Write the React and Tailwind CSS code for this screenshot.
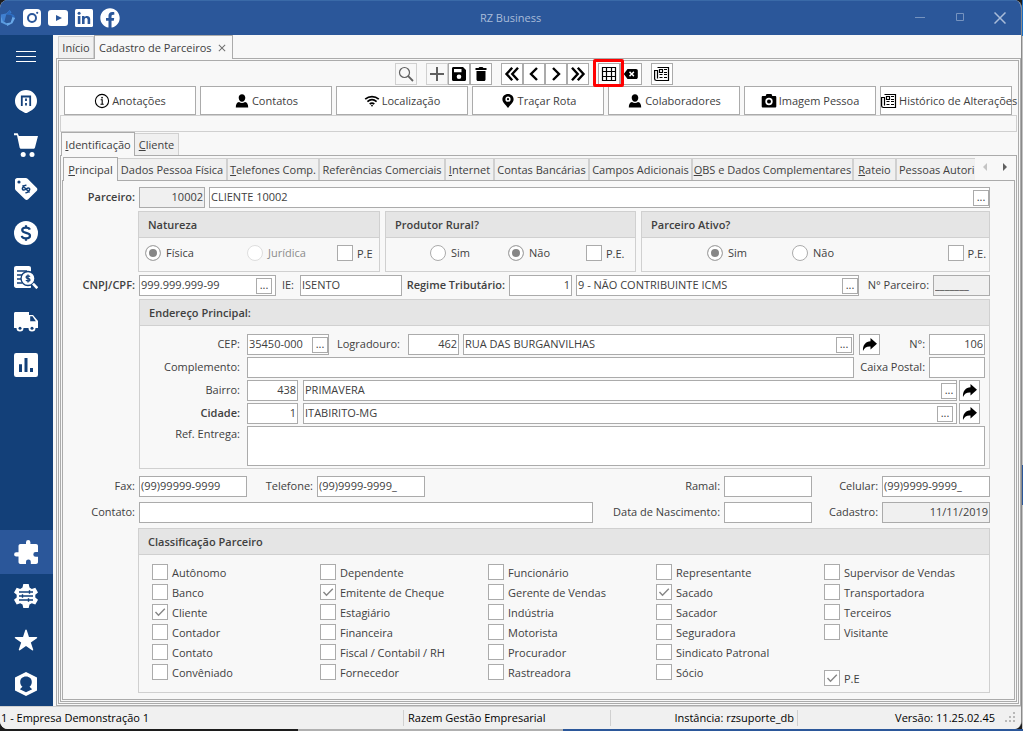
import React from "react";
import { MdClose } from "react-icons/md";
import { FaFacebook } from "react-icons/fa";
import { IoStar } from "react-icons/io5";

const line = "border-[#ababab]";

function Field({ label, className = "", gray, right, more, moreClass = "right-1", value = "", ...rest }) {
  return (
    <div className={"relative flex h-[21px] shrink-0 " + className}>
      <input
        aria-label={label}
        defaultValue={value}
        readOnly={gray}
        className={
          "h-full w-full min-w-0 border px-px pb-0.5 text-[11px] text-[#404040] outline-none " +
          line +
          (gray ? " bg-[#f0f0f0]" : " bg-white") +
          (right ? " text-right" : "")
        }
        {...rest}
      />
      {more && (
        <button
          type="button"
          aria-label={"Buscar " + label}
          className={"absolute top-[3px] flex h-4 w-4 items-center justify-center border bg-white pb-1 text-[11px] leading-none " + line + " " + moreClass}
        >
          ...
        </button>
      )}
    </div>
  );
}

function Label({ className = "", bold, children }) {
  return (
    <span className={"shrink-0 text-right whitespace-nowrap " + (bold ? "font-semibold " : "") + className}>
      {children}
    </span>
  );
}

function Radio({ name, label, checked, disabled, className = "" }) {
  return (
    <label className={"flex items-center gap-[5px] whitespace-nowrap " + (disabled ? "text-[#8c8c8c] " : "") + className}>
      <input
        type="radio"
        name={name}
        defaultChecked={checked}
        disabled={disabled}
        className="h-4 w-4 shrink-0 appearance-none rounded-full border border-[#ababab] bg-white checked:border-[#ababab] checked:bg-[#868686] checked:shadow-[inset_0_0_0_3px_#fff] disabled:border-[#dedede]"
      />
      {label}
    </label>
  );
}

function Check({ label, checked, className = "" }) {
  return (
    <label className={"flex items-center gap-1 whitespace-nowrap " + className}>
      <span className="relative flex h-4 w-4 shrink-0">
        <input type="checkbox" defaultChecked={checked} className="peer h-4 w-4 appearance-none border border-[#ababab] bg-white" />
        <svg viewBox="0 0 16 16" className="pointer-events-none absolute inset-0 hidden h-4 w-4 peer-checked:block" fill="none" stroke="#868686" strokeWidth="1.4">
          <path d="M3.5 8l3 3.2L12.8 4.8" />
        </svg>
      </span>
      <span className="pt-0.5">{label}</span>
    </label>
  );
}

function Group({ title, className = "", children }) {
  return (
    <section role="group" aria-label={title} className={"flex min-w-0 flex-col border border-[#d0d0d0] " + className}>
      <h2 className="flex h-[26px] shrink-0 items-center border-b border-[#d0d0d0] bg-[#e5e5e5] px-[9px] font-semibold">{title}</h2>
      {children}
    </section>
  );
}

function ArrowButton({ label }) {
  return (
    <button type="button" aria-label={label} className={"flex h-[21px] w-[21px] shrink-0 items-center justify-center border bg-white text-black " + line}>
      <svg viewBox="0 0 16 14" className="h-3.5 w-4" fill="currentColor">
        <path d="M8.500 0L15 5.800L8.500 11.600V8.500C5 8.200 2.500 9.400 1 13C0.400 7 4 3.400 8.500 3.200Z" />
      </svg>
    </button>
  );
}

const NewsIcon = ({ className }) => (
  <svg viewBox="0 0 16 16" className={className} fill="none" stroke="currentColor" strokeWidth="1.2">
    <path d="M3.500 1.500h11v13H2.500c-1.200 0-1.900-.7-1.900-1.700V4.500h2.900v8" />
    <path d="M5.500 3.500h3v3h-3zM10 3.500h3M10 6.500h3M5.500 8.500h3M10 8.500h3M5.500 11.500h3M10 11.500h3" />
  </svg>
);
const PersonIcon = ({ className }) => (
  <svg viewBox="0 0 16 16" className={className} fill="currentColor">
    <path d="M8 1.200c2 0 3.300 1.500 3.300 3.600S10 8.800 8 8.800 4.700 7 4.700 4.800 6 1.200 8 1.200zM5 8.900c1.800 1.500 4.200 1.500 6 0 2.200.5 3.200 2 3.200 5.600H1.800c0-3.600 1-5.100 3.200-5.600z" />
  </svg>
);
const InfoIcon = ({ className }) => (
  <svg viewBox="0 0 16 16" className={className} fill="none" stroke="currentColor" strokeWidth="1.100">
    <circle cx="8" cy="8" r="6.600" />
    <path d="M6.700 6.700h1.500v4.500M6.500 11.200h3.200" />
    <rect x="7.300" y="3.900" width="1.500" height="1.500" fill="currentColor" stroke="none" />
  </svg>
);
const WifiIcon = ({ className }) => (
  <svg viewBox="0 0 16 16" className={className} fill="none" stroke="currentColor" strokeWidth="1.700">
    <path d="M1.200 6.200c4-3.500 9.600-3.500 13.600 0M3.400 8.700c2.800-2.400 6.400-2.400 9.200 0M5.700 11c1.500-1.200 3.100-1.200 4.600 0" />
    <circle cx="8" cy="12.600" r="0.900" fill="currentColor" stroke="none" />
  </svg>
);
const PinIcon = ({ className }) => (
  <svg viewBox="0 0 16 16" className={className} fill="currentColor">
    <path fillRule="evenodd" d="M8 1c3.300 0 5.600 2.300 5.600 5.300C13.600 9.500 10.500 11.500 8 15 5.500 11.500 2.400 9.500 2.400 6.300 2.400 3.300 4.700 1 8 1zm0 2.600a2.600 2.600 0 100 5.200 2.600 2.600 0 000-5.200z" />
    <circle cx="8" cy="6.200" r="1.100" />
  </svg>
);
const CameraIcon = ({ className }) => (
  <svg viewBox="0 0 16 16" className={className} fill="currentColor">
    <path fillRule="evenodd" d="M5.500 1h5l.8 2H14c.8 0 1.300.5 1.300 1.300v8.900c0 .8-.5 1.300-1.300 1.300H2c-.8 0-1.300-.5-1.300-1.300V4.300C.7 3.500 1.200 3 2 3h2.700zM8 4.800a3.700 3.700 0 100 7.400 3.700 3.700 0 000-7.400zm0 1.700a2 2 0 110 4 2 2 0 010-4z" />
  </svg>
);

function SideIcon({ children }) {
  return (
    <svg viewBox="0 0 24 24" className="h-6 w-6" fill="currentColor">
      {children}
    </svg>
  );
}
const DARK = "#134079";
const sideTop = [
  ["Empresa", <SideIcon key="i">
    <path d="M12 1a11 11 0 0111 11c0 4.200-2.300 7.600-5.800 9.500L12 24.500l-5.200-3C3.300 19.600 1 16.200 1 12A11 11 0 0112 1z" />
    <path d="M7.800 17V7.500h8.400V17" fill="none" stroke={DARK} strokeWidth="1.800" />
    <path d="M12 9.500v2.500m0 2v2.500" fill="none" stroke={DARK} strokeWidth="1.800" />
  </SideIcon>],
  ["Vendas", <SideIcon key="i">
    <path d="M0 .2h3.700l1.200 2.800H24l-3 11.400c-.2.900-.8 1.400-1.800 1.400H7.400c-1 0-1.600-.5-1.800-1.400L3 2.200H0z" />
    <circle cx="9.200" cy="21.500" r="2.500" />
    <circle cx="18" cy="21.500" r="2.500" />
  </SideIcon>],
  ["Preços", <SideIcon key="i">
    <path d="M1 3.200C1 2 2 1 3.200 1h8.600c.7 0 1.300.3 1.800.7l9 9c1 1 1 2.200 0 3.200l-8.400 8.400c-1 1-2.200 1-3.200 0l-9.300-9.100C1.300 12.700 1 12.100 1 11.500z" />
    <circle cx="5" cy="5" r="1.600" fill={DARK} />
    <g transform="rotate(-45 12 12)" fill="none" stroke={DARK} strokeWidth="1.500">
      <path d="M14.800 9.800c-1-1.900-5.600-1.600-5.600.5 0 2.400 5.600 1 5.600 3.500 0 2-4.600 2.400-5.800.3M12 7v10" />
    </g>
  </SideIcon>],
  ["Financeiro", <SideIcon key="i">
    <circle cx="12" cy="12" r="12" />
    <path d="M15.800 8.600c-.4-1.400-1.800-2-3.800-2-2.300 0-3.800.9-3.800 2.500 0 3.900 7.800 1.700 7.800 5.600 0 1.700-1.600 2.700-4 2.700s-4-.9-4.200-2.500M12 4.200v2.600m0 10.400v2.600" fill="none" stroke={DARK} strokeWidth="2.200" />
  </SideIcon>],
  ["Relatórios", <SideIcon key="i">
    <path d="M2.200 1h12.600c1.300 0 2.200.9 2.200 2.200V22c0 .6-.4 1-1 1H2.200C.900 23 0 22.100 0 20.800V3.200C0 1.900.9 1 2.200 1z" />
    <path d="M3 6h10M3 10h5M3 14h4M3 18h5" stroke={DARK} strokeWidth="1.700" />
    <circle cx="14" cy="13.500" r="7" stroke={DARK} strokeWidth="1.400" />
    <path d="M19 18.600l4.300 4.600" stroke="white" strokeWidth="2.600" />
    <path d="M16 11.700c-1-1.200-3.900-.9-3.900.5 0 1.700 3.900.9 3.900 2.700 0 1.300-2.900 1.700-4.100.3M14 9.600v8" fill="none" stroke={DARK} strokeWidth="1.300" />
  </SideIcon>],
  ["Transporte", <SideIcon key="i">
    <path d="M1.500 3H15v3h4l5 6v7h-2.500a3.500 3.500 0 01-7 0h-5a3.500 3.500 0 01-7 0H0V4.500C0 3.600.6 3 1.500 3z" />
    <path d="M16.200 7.200h2.300l3.300 5h-5.600z" fill={DARK} />
    <circle cx="6" cy="19.300" r="1.500" fill={DARK} />
    <circle cx="18" cy="19.300" r="1.500" fill={DARK} />
  </SideIcon>],
  ["Indicadores", <SideIcon key="i">
    <rect width="24" height="24" rx="2.200" />
    <path d="M6.500 11.300V19M12 5v14M17.500 15v4" stroke={DARK} strokeWidth="3" />
  </SideIcon>],
];
const sideBottom = [
  ["Módulos", <SideIcon key="i">
    <path d="M4.500 6c0-1.200.8-2 2-2H12V2.200a2.200 2.200 0 014.400 0V4H22c1.200 0 2 .8 2 2v6h-2.300a2.400 2.400 0 000 4.800H24V22c0 1.200-.8 2-2 2h-5.200v-2.200a2.400 2.400 0 00-4.800 0V24H6.500c-1.200 0-2-.8-2-2v-5.500H2.200a2.100 2.100 0 010-4.200h2.300z" />
  </SideIcon>],
  ["Configurações", <SideIcon key="i">
    <path d="M9.300 0h5.400l.8 3.600 2.300 1.300 3.500-1.200 2.700 4.700-2.700 2.400v2.600l2.700 2.400-2.700 4.700-3.500-1.200-2.300 1.200-.8 3.500H9.300l-.8-3.500-2.300-1.200-3.500 1.200L0 15.800l2.700-2.400v-2.600L0 8.400l2.700-4.700 3.500 1.200 2.300-1.300z" />
    <path d="M5 8h14M5 12h14M5 16h14M15.500 6.200v3.600M8.500 10.200v3.600M14.500 14.200v3.600" stroke={DARK} strokeWidth="1.400" />
  </SideIcon>],
  ["Favoritos", <IoStar key="i" className="h-6 w-6" />],
  ["Usuário", <SideIcon key="i">
    <path d="M12 0l11 5.500v13L12 24 1 18.500v-13z" />
    <path d="M12 4.500c3.500 0 5.800 2.300 5.800 5.500 0 2.200-.9 3.700-2.300 4.800l2.700 2.400L12 20.300l-6.200-3.100 2.700-2.400C7.100 13.700 6.200 12.200 6.200 10c0-3.200 2.300-5.500 5.800-5.500z" fill={DARK} />
  </SideIcon>],
];

const actions = [
  ["Anotações", InfoIcon],
  ["Contatos", PersonIcon],
  ["Localização", WifiIcon],
  ["Traçar Rota", PinIcon],
  ["Colaboradores", PersonIcon],
  ["Imagem Pessoa", CameraIcon],
  ["Histórico de Alterações", NewsIcon],
];

function Chevrons({ d }) {
  return (
    <svg viewBox="0 0 16 16" className="h-4 w-4" fill="none" stroke="currentColor" strokeWidth="2.400">
      <path d={d} />
    </svg>
  );
}

const toolGroups = [
  [["Pesquisar", <svg key="i" viewBox="0 0 16 16" className="h-4 w-4" fill="none" stroke="currentColor" strokeWidth="1.200"><circle cx="6.500" cy="6.500" r="5" /><path d="M10.200 10.200L15 15" strokeWidth="1.800" /></svg>, true]],
  [
    ["Novo", <svg key="i" viewBox="0 0 16 16" className="h-4 w-4" stroke="currentColor" strokeWidth="2"><path d="M8 1v14M1 8h14" /></svg>, true],
    ["Salvar", <svg key="i" viewBox="0 0 16 16" className="h-4 w-4" fill="currentColor"><path fillRule="evenodd" d="M2.500 1H12l3 3v9.500c0 .9-.6 1.500-1.500 1.500h-11C1.600 15 1 14.400 1 13.500v-11C1 1.600 1.600 1 2.500 1zM3 3v3.200h7.500V3zM8 8.500a2.300 2.300 0 100 4.600 2.300 2.300 0 000-4.600z" /></svg>],
    ["Excluir", <svg key="i" viewBox="0 0 16 16" className="h-4 w-4" fill="currentColor"><path d="M2.500 2h3l1-1h3l1 1h3v2h-11zM3.500 5h9v8.500c0 .9-.6 1.500-1.500 1.500H5c-.9 0-1.500-.6-1.500-1.500z" /></svg>],
  ],
  [
    ["Primeiro", <Chevrons key="i" d="M8.200 1.800L2.500 8l5.700 6.200M14 1.800L8.300 8l5.700 6.200" />],
    ["Anterior", <Chevrons key="i" d="M11 2L5 8l6 6" />],
    ["Próximo", <Chevrons key="i" d="M5 2l6 6-6 6" />],
    ["Último", <Chevrons key="i" d="M2 1.800L7.700 8 2 14.200M7.800 1.800L13.500 8l-5.700 6.200" />],
  ],
  [
    ["Grade", <svg key="i" viewBox="0 0 16 16" className="h-4 w-4 shrink-0" fill="none" stroke="currentColor" strokeWidth="1.200"><path d="M1.500 1.500h13v13h-13zM1.500 5.500h13M1.500 10.500h13M5.500 1.500v13M10.500 1.500v13" /></svg>, false, true],
    ["Limpar", <svg key="i" viewBox="0 0 16 16" className="h-4 w-4" fill="currentColor"><path fillRule="evenodd" d="M4.500 3H13c1.100 0 1.800.7 1.800 1.800v6.400c0 1.100-.7 1.800-1.800 1.800H4.500L.8 8zM7 5.300L6 6.400 7.700 8 6 9.600l1 1.100L8.700 9l1.700 1.700 1-1.100L9.800 8l1.600-1.600-1-1.100L8.700 7z" /></svg>],
  ],
  [["Relatório", <NewsIcon key="i" className="h-4 w-4" />]],
];

const innerTabs = [
  ["", "Dados Pessoa Física", "w-[110px]"],
  ["T", "elefones Comp.", "w-[92px]"],
  ["", "Referências Comerciais", "w-[126px]"],
  ["I", "nternet", "w-[49px]"],
  ["", "Contas Bancárias", "w-[95px]"],
  ["", "Campos Adicionais", "w-[103px]"],
  ["O", "BS e Dados Complementares", "w-[161px]"],
  ["R", "ateio", "w-[43px]"],
];

const columns = [
  [["Autônomo"], ["Banco"], ["Cliente", true], ["Contador"], ["Contato"], ["Convêniado"]],
  [["Dependente"], ["Emitente de Cheque", true], ["Estagiário"], ["Financeira"], ["Fiscal / Contabil / RH"], ["Fornecedor"]],
  [["Funcionário"], ["Gerente de Vendas"], ["Indústria"], ["Motorista"], ["Procurador"], ["Rastreadora"]],
  [["Representante"], ["Sacado", true], ["Sacador"], ["Seguradora"], ["Sindicato Patronal"], ["Sócio"]],
  [["Supervisor de Vendas"], ["Transportadora"], ["Terceiros"], ["Visitante"]],
];

function TitleBar() {
  return (
    <header className="grid h-[35px] shrink-0 grid-cols-[1fr_auto_1fr] items-center border-t border-[#3a6aa8] bg-[#2b579a] text-white">
      <div className="flex items-center gap-[7px]">
        <svg viewBox="0 0 18 18" className="h-[18px] w-4">
          <path d="M1 5l6-1 4-4 2 3-6 2-2 8-3-1z" fill="#3f7fd0" />
          <path d="M11 0l1 4 4 2 1 4-3 1-1-5-6-1z" fill="#2d6cc0" />
          <path d="M17 9l-3 6-6 3-1-3 5-1 2-6z" fill="#69a8e8" />
          <path d="M1 6l2 6 6 4-2 1-6-3z" fill="#5a9be0" />
        </svg>
        <a href="#instagram" aria-label="Instagram">
          <svg viewBox="0 0 18 18" className="h-[18px] w-[18px]">
            <rect width="18" height="18" rx="4" fill="white" />
            <circle cx="9" cy="9" r="4" fill="none" stroke="#2b579a" strokeWidth="2" />
            <circle cx="14.200" cy="3.800" r="1.100" fill="#2b579a" />
          </svg>
        </a>
        <a href="#youtube" aria-label="YouTube">
          <svg viewBox="0 0 20 16" className="h-4 w-5">
            <rect width="20" height="16" rx="3" fill="white" />
            <path d="M8 5l6 3-6 3z" fill="#2b579a" />
          </svg>
        </a>
        <a href="#linkedin" aria-label="LinkedIn">
          <svg viewBox="0 0 18 18" className="h-[18px] w-[18px]">
            <rect width="18" height="18" rx="1.500" fill="white" />
            <path d="M2.800 7h2.600v8H2.800zM7 7h2.500v1.200c1.200-2 5.700-2 5.700 1.900V15h-2.600v-4.200c0-2.400-3-2.200-3 0V15H7z" fill="#2b579a" />
            <circle cx="4.100" cy="4.300" r="1.500" fill="#2b579a" />
          </svg>
        </a>
        <a href="#facebook" aria-label="Facebook">
          <FaFacebook className="h-5 w-5" />
        </a>
      </div>
      <h1 className="text-[11px] text-[#a9bcd9]">RZ Business</h1>
      <div className="flex items-center justify-end pr-px text-[#a9bcd9]">
        <button type="button" aria-label="Minimizar" className="flex h-8 w-10 items-center justify-center">
          <svg viewBox="0 0 10 10" className="h-2.5 w-2.5" stroke="currentColor" opacity="0.600"><path d="M0 4.500h10" /></svg>
        </button>
        <button type="button" aria-label="Maximizar" className="flex h-8 w-10 items-center justify-center">
          <svg viewBox="0 0 10 10" className="h-2.5 w-2.5" fill="none" stroke="currentColor" opacity="0.600"><path d="M1.500 .5h7v7h-7z" /></svg>
        </button>
        <button type="button" aria-label="Fechar" className="flex h-8 w-10 items-center justify-center">
          <svg viewBox="0 0 12 12" className="h-3 w-3" stroke="currentColor" strokeWidth="1.500"><path d="M.5.5l11 11M11.500.5l-11 11" /></svg>
        </button>
      </div>
    </header>
  );
}

function Sidebar() {
  return (
    <nav className="flex w-[53px] shrink-0 flex-col bg-[#134079] text-white">
      <button type="button" aria-label="Menu" className="flex h-11 items-center justify-center pr-px pb-0.5">
        <svg viewBox="0 0 20 11" className="h-[11px] w-5" stroke="currentColor"><path d="M0 .5h20M0 5.500h20M0 10.500h20" /></svg>
      </button>
      {sideTop.map(([name, icon]) => (
        <button key={name} type="button" aria-label={name} className="flex h-11 items-center justify-center pr-px">{icon}</button>
      ))}
      <div className="grow" />
      {sideBottom.map(([name, icon], i) => (
        <button key={name} type="button" aria-label={name} className={"flex h-11 items-center justify-center pr-px " + (i === 0 ? "bg-[#2b579a]" : "")}>{icon}</button>
      ))}
    </nav>
  );
}

function Toolbar() {
  return (
    <div className="flex justify-center gap-[9px] pt-px pr-2.5">
      {toolGroups.map((group, g) => (
        <div key={g} className="flex">
          {group.map(([name, icon, disabled, marked]) => (
            <button
              key={name}
              type="button"
              aria-label={name}
              disabled={disabled}
              className={"relative flex h-[22px] w-[22px] items-center justify-center border bg-white text-black disabled:border-[#d0d0d0] disabled:bg-[#f8f8f8] disabled:text-[#606060] " + line}
            >
              {icon}
              {marked && <span className="absolute -top-[5px] -right-[5px] -bottom-[3px] -left-[6px] z-10 rounded-xs border-3 border-[#ff0000]" />}
            </button>
          ))}
        </div>
      ))}
    </div>
  );
}

function PrincipalForm() {
  return (
    <form className="flex grow flex-col pt-1.5 pr-6 pb-1.5 leading-5">
      <div className="flex">
        <Label bold className="w-[76px] pr-1">Parceiro:</Label>
        <Field label="Código do parceiro" value="10002" gray right className="w-[66px]" />
        <Field label="Parceiro" value="CLIENTE 10002" more moreClass="right-px" className="ml-1 flex-1" />
      </div>

      <div className="mt-[3px] ml-[75px] flex h-[61px] gap-[5px]">
        <Group title="Natureza" className="w-[242px]">
          <div className="flex grow items-center pb-[3px] pl-[6px]">
            <Radio name="natureza" label="Física" checked className="w-[102px]" />
            <Radio name="natureza" label="Jurídica" disabled className="w-[90px]" />
            <Check label="P.E" />
          </div>
        </Group>
        <Group title="Produtor Rural?" className="w-[251px]">
          <div className="flex grow items-center pb-[3px] pl-11">
            <Radio name="rural" label="Sim" className="w-[78px]" />
            <Radio name="rural" label="Não" checked className="w-[78px]" />
            <Check label="P.E." />
          </div>
        </Group>
        <Group title="Parceiro Ativo?" className="flex-1">
          <div className="flex grow items-center pr-[3px] pb-[3px] pl-[65px]">
            <Radio name="ativo" label="Sim" checked className="w-[85px]" />
            <Radio name="ativo" label="Não" />
            <Check label="P.E." className="ml-auto" />
          </div>
        </Group>
      </div>

      <div className="mt-[3px] flex">
        <Label bold className="w-[76px] pr-1">CNPJ/CPF:</Label>
        <Field label="CNPJ/CPF" value="999.999.999-99" more className="w-[137px]" />
        <Label className="w-6 pr-1.5">IE:</Label>
        <Field label="IE" value="ISENTO" className="w-[102px]" />
        <Label bold className="w-[107px] pr-1">Regime Tributário:</Label>
        <Field label="Código do regime" value="1" right className="w-[63px]" />
        <Field label="Regime Tributário" value="9 - NÃO CONTRIBUINTE ICMS" more moreClass="right-px" className="ml-1 flex-1" />
        <Label className="w-[74px] pr-1">N° Parceiro:</Label>
        <Field label="N° Parceiro" value="_______" gray className="w-[57px]" />
      </div>

      <Group title="Endereço Principal:" className="mt-[3px] ml-[76px]">
        <div className="flex flex-col gap-0.5 pt-2 pr-1 pb-0.5">
          <div className="flex">
            <Label className="w-[107px] pr-[7px]">CEP:</Label>
            <Field label="CEP" value="35450-000" more moreClass="right-px" className="w-[82px]" />
            <Label className="w-[79px] pr-2">Logradouro:</Label>
            <Field label="Código do logradouro" value="462" right className="w-[51px]" />
            <Field label="Logradouro" value="RUA DAS BURGANVILHAS" more moreClass="right-0.5" className="mr-[5px] ml-1 flex-1" />
            <ArrowButton label="Abrir logradouro" />
            <Label className="w-[49px] pr-1">N°:</Label>
            <Field label="N°" value="106" right className="w-14" />
          </div>
          <div className="flex">
            <Label className="w-[107px] pr-[7px]">Complemento:</Label>
            <Field label="Complemento" className="flex-1" />
            <Label className="w-[75px] pr-1">Caixa Postal:</Label>
            <Field label="Caixa Postal" className="w-14" />
          </div>
          <div className="flex pr-[5px]">
            <Label className="w-[107px] pr-[7px]">Bairro:</Label>
            <Field label="Código do bairro" value="438" right className="w-[51px]" />
            <Field label="Bairro" value="PRIMAVERA" more moreClass="right-0" className="mr-0.5 ml-[5px] flex-1" />
            <ArrowButton label="Abrir bairro" />
          </div>
          <div className="flex pr-[5px]">
            <Label bold className="w-[107px] pr-[7px]">Cidade:</Label>
            <Field label="Código da cidade" value="1" right className="w-[51px]" />
            <Field label="Cidade" value="ITABIRITO-MG" more className="mr-0.5 ml-[5px] flex-1" />
            <ArrowButton label="Abrir cidade" />
          </div>
          <div className="flex">
            <Label className="w-[107px] pr-[7px] leading-4">Ref. Entrega:</Label>
            <textarea aria-label="Ref. Entrega" className={"h-10 flex-1 resize-none border bg-white outline-none " + line} />
          </div>
        </div>
      </Group>

      <div className="mt-[7px] flex">
        <Label className="w-[76px] pr-1">Fax:</Label>
        <Field label="Fax" value="(99)99999-9999" className="w-[108px]" />
        <Label className="w-[70px] pr-1">Telefone:</Label>
        <Field label="Telefone" value="(99)9999-9999_" className="w-[108px]" />
        <Label className="flex-1 pr-1">Ramal:</Label>
        <Field label="Ramal" className="w-[88px]" />
        <Label className="w-[70px] pr-1">Celular:</Label>
        <Field label="Celular" value="(99)9999-9999_" className="w-[108px]" />
      </div>
      <div className="mt-[5px] flex">
        <Label className="w-[76px] pr-1">Contato:</Label>
        <Field label="Contato" className="flex-1" />
        <Label className="w-[131px] pr-1">Data de Nascimento:</Label>
        <Field label="Data de Nascimento" className="w-[88px]" />
        <Label className="w-[70px] pr-1">Cadastro:</Label>
        <Field label="Cadastro" value="11/11/2019" gray right className="w-[108px]" />
      </div>

      <Group title="Classificação Parceiro" className="mt-[5px] ml-[75px] grow">
        <div className="flex pt-[7px] pl-[13px]">
          {columns.map((col, i) => (
            <div key={i} className={"flex flex-col " + (i < 4 ? "w-[168px]" : "")}>
              {col.map(([label, checked]) => (
                <Check key={label} label={label} checked={checked} className="h-5" />
              ))}
              {i === 4 && <Check label="P.E" checked className="mt-[26px] h-5" />}
            </div>
          ))}
        </div>
      </Group>
    </form>
  );
}

export default function App() {
  return (
    <div className="flex min-h-screen flex-col bg-[#1c1c1c] font-['Open_Sans','Noto_Sans',sans-serif] text-[11px] leading-4 text-[#404040]">
      <div className="flex grow">
        <div className="flex min-w-0 grow flex-col overflow-hidden rounded-t-lg rounded-b-lg border-r border-[#8a8a8a] bg-[#f8f8f8]">
          <TitleBar />
          <div className="flex grow">
            <Sidebar />
            <main className="flex min-w-0 grow flex-col pl-[3px]">
              <div role="tablist" className="flex h-[23px] items-end pl-0.5">
                <button type="button" role="tab" className="h-[22px] w-9 border border-b-0 border-[#d0d0d0] bg-[#f0f0f0]">Início</button>
                <button type="button" role="tab" aria-selected="true" className={"relative z-10 -mb-px flex h-6 w-[139px] items-center border border-b-0 bg-[#f8f8f8] pl-1 " + line}>
                  <span className="grow text-left">Cadastro de Parceiros</span>
                  <MdClose className="mr-1 h-3 w-3 text-[#707070]" />
                </button>
              </div>
              <div className={"flex grow flex-col border p-px " + line}>
                <div className={"flex grow flex-col border p-px " + line}>
                  <Toolbar />
                  <div className="grid grid-cols-7 gap-1 pt-px pr-[5px] pl-1">
                    {actions.map(([name, Icon]) => (
                      <button key={name} type="button" className={"flex h-[29px] min-w-0 items-center justify-center-safe gap-0.5 border bg-white whitespace-nowrap " + line}>
                        <Icon className="h-4 w-4 shrink-0 text-black" />
                        {name}
                      </button>
                    ))}
                  </div>
                  <div className="h-[17px] shrink-0 border border-[#d0d0d0]" />
                  <div role="tablist" className="flex h-[23px] items-end pl-px">
                    <button type="button" role="tab" aria-selected="true" className={"relative z-10 -mb-px h-6 w-[74px] border border-b-0 bg-[#f8f8f8] " + line}>
                      <u>I</u>dentificação
                    </button>
                    <button type="button" role="tab" className="h-[22px] w-11 border border-b-0 border-l-0 border-[#d0d0d0] bg-[#f0f0f0]">
                      <u>C</u>liente
                    </button>
                  </div>
                  <div className={"flex grow flex-col border p-px " + line}>
                    <div role="tablist" className="flex h-[23px] items-end pl-px">
                      <button type="button" role="tab" aria-selected="true" className={"relative z-10 -mb-px h-6 w-[55px] shrink-0 border border-b-0 bg-[#f8f8f8] " + line}>
                        <u>P</u>rincipal
                      </button>
                      <div className="flex min-w-0 flex-1 overflow-hidden">
                        {innerTabs.map(([key, rest, width]) => (
                          <button key={rest} type="button" role="tab" className={"h-[22px] shrink-0 border-t border-r-2 border-[#d0d0d0] bg-[#f0f0f0] whitespace-nowrap " + width}>
                            <u>{key}</u>{rest}
                          </button>
                        ))}
                        <button type="button" role="tab" className="h-[22px] shrink-0 border-t border-[#d0d0d0] bg-[#f0f0f0] px-0.5 whitespace-nowrap">Pessoas Autori</button>
                      </div>
                      <div className="flex h-full w-10 shrink-0 items-center justify-between pr-2 pb-1 pl-2">
                        <button type="button" aria-label="Abas anteriores">
                          <svg viewBox="0 0 4 8" className="h-2 w-1" fill="#c4c4c4"><path d="M4 0v8L0 4z" /></svg>
                        </button>
                        <button type="button" aria-label="Próximas abas">
                          <svg viewBox="0 0 4 8" className="h-2 w-1" fill="#606060"><path d="M0 0v8l4-4z" /></svg>
                        </button>
                      </div>
                    </div>
                    <div className={"flex grow flex-col border " + line}>
                      <PrincipalForm />
                    </div>
                  </div>
                </div>
              </div>
            </main>
          </div>
          <footer className="flex h-[23px] shrink-0 items-center border-t border-[#d0d0d0] bg-[#f0f0f0] text-black">
            <span className="w-[403px] pl-px">1 - Empresa Demonstração 1</span>
            <span className="w-[207px] border-l border-[#d0d0d0] pl-1">Razem Gestão Empresarial</span>
            <span className="w-[188px] border-x border-[#d0d0d0] pr-[3px] text-right">Instância: rzsuporte_db</span>
            <span className="grow text-right">Versão: 11.25.02.45</span>
            <svg viewBox="0 0 12 12" className="mr-1 ml-2.5 h-3 w-3" fill="#b8b8b8">
              <path d="M8 0h2v2H8zM4 4h2v2H4zM8 4h2v2H8zM0 8h2v2H0zM4 8h2v2H4zM8 8h2v2H8z" />
            </svg>
          </footer>
        </div>
        <div className="flex w-px flex-col bg-[#c4c4c4]">
          <div className="h-9 bg-[#1a6fc4]" />
          <div className="grow" />
          <div className="mb-[224px] h-10 bg-[#2b579a]" />
        </div>
      </div>
      <div className="flex h-0.5">
        <div className="w-[298px] bg-[#1c1c1c]" />
        <div className="w-[265px] bg-[#b0b0b0]" />
        <div className="grow bg-[#2b579a]" />
      </div>
    </div>
  );
}
